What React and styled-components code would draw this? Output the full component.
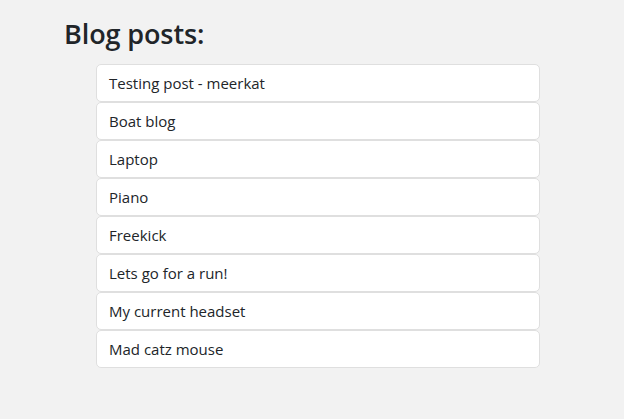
import styled, { createGlobalStyle } from "styled-components"

const GlobalStyle = createGlobalStyle`
  body {
    margin: 0;
    background-color: #f2f2f2;
    font-family: "Open Sans", "Noto Sans", sans-serif;
    color: #212529;
  }
`

const Page = styled.div`
  padding: 14px 0 0 64px;
`

const Title = styled.h1`
  margin: 0 0 10px 0;
  font-size: 27px;
  font-weight: 600;
  line-height: 40px;
  letter-spacing: -0.1px;
`

const List = styled.ul`
  list-style: none;
  margin: 0 0 0 32px;
  padding: 0;
  width: 444px;
  display: flex;
  flex-direction: column;
`

const Item = styled.li`
  box-sizing: border-box;
  height: 38px;
  display: flex;
  align-items: center;
  padding: 0 12px;
  background-color: #fff;
  border: 1px solid #dfdfdf;
  border-radius: 5px;
  font-size: 15px;
`

const posts = [
  "Testing post - meerkat",
  "Boat blog",
  "Laptop",
  "Piano",
  "Freekick",
  "Lets go for a run!",
  "My current headset",
  "Mad catz mouse",
]

const App = () => {
  return (
    <>
      <GlobalStyle />
      <Page>
        <Title>Blog posts:</Title>
        <List>
          {posts.map((p) => (
            <Item key={p}>{p}</Item>
          ))}
        </List>
      </Page>
    </>
  )
}

export default App
